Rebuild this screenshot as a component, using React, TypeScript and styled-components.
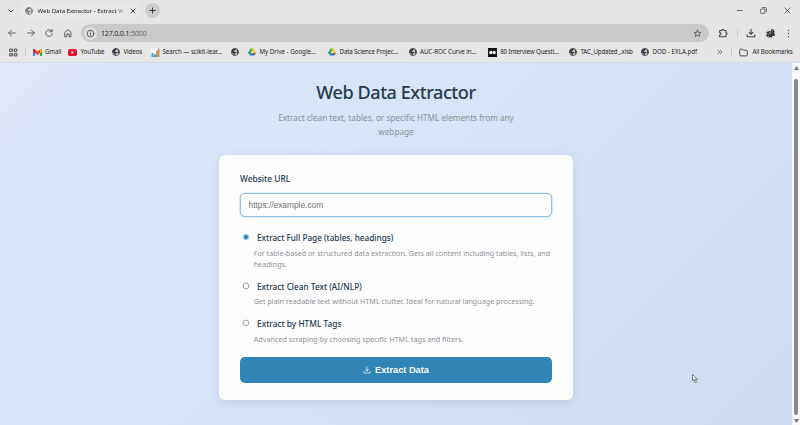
import React from 'react';
import styled, { createGlobalStyle } from 'styled-components';

const GlobalStyle = createGlobalStyle`
  * { box-sizing: border-box; }
  html, body { margin: 0; padding: 0; }
  body { font-family: "Noto Sans", "Open Sans", sans-serif; overflow: hidden; }
`;

const Window = styled.div`
  width: 800px;
  height: 425px;
  display: flex;
  flex-direction: column;
  background: #e5e5e5;
`;

const TabStrip = styled.div`
  height: 22px;
  display: flex;
  align-items: center;
  padding: 0 29px 1px 8px;
`;

const Tab = styled.div`
  width: 121px;
  height: 17px;
  margin-left: 6px;
  padding: 0 5px 0 5px;
  display: flex;
  align-items: center;
  gap: 4.5px;
  background: #e8e8e8;
  border-radius: 5px;
  svg { flex: none; }
`;

const TabTitle = styled.span`
  flex: 1;
  overflow: hidden;
  white-space: nowrap;
  font-size: 6.15px;
  font-weight: 400;
  line-height: 10px;
  letter-spacing: -0.06px;
  color: #1f1f21;
  mask-image: linear-gradient(90deg, #000 88%, transparent 100%);
`;

const NewTab = styled.div`
  width: 15px;
  height: 15px;
  margin-left: 4px;
  display: grid;
  place-items: center;
  border-radius: 50%;
  background: #cccccd;
`;

const WindowButtons = styled.div`
  margin-left: auto;
  margin-right: -20px;
  display: flex;
  gap: 17px;
`;

const Toolbar = styled.div`
  height: 22px;
  display: flex;
  align-items: center;
  padding: 0 7px 0 7px;
`;

const NavButtons = styled.div`
  width: 74px;
  display: flex;
  gap: 8.7px;
`;

const AddressBar = styled.div`
  width: 628px;
  height: 18px;
  padding: 0 7px 0 3px;
  display: flex;
  align-items: center;
  border-radius: 9px;
  background: #c9c9ca;
`;

const InfoBadge = styled.span`
  width: 13px;
  height: 13px;
  display: grid;
  place-items: center;
  border-radius: 50%;
  background: #dedede;
`;

const Url = styled.span`
  flex: 1;
  margin-left: 4px;
  font-size: 7.2px;
  line-height: 12px;
  letter-spacing: -0.25px;
  color: #2d2d2f;
  span { color: #69696b; }
`;

const Actions = styled.div`
  flex: 1;
  display: flex;
  align-items: center;
  justify-content: space-between;
  padding-left: 9px;
`;

const Divider = styled.i`
  width: 1px;
  height: 8px;
  background: #cbcbcd;
`;

const Bookmarks = styled.div`
  height: 19px;
  display: grid;
  grid-template-columns: 16px 8px 35px 44px 39px 80px 17px 80px 80.5px 79.5px 81px 72px 76px 14px 8px 1fr;
  align-items: center;
  padding: 0 0 2px 9px;
  border-bottom: 1px solid #d3dae6;
  background: #e6e6e7;
`;

const Bookmark = styled.div<{ $gap?: number; $track?: number }>`
  display: flex;
  align-items: center;
  gap: ${p => p.$gap ?? 3.5}px;
  white-space: nowrap;
  font-size: 6.2px;
  font-weight: 400;
  line-height: 10px;
  letter-spacing: ${p => p.$track ?? -0.05}px;
  color: #1f1f22;
  svg { flex: none; }
`;

const Viewport = styled.div`
  height: 362px;
  display: flex;
`;

const Page = styled.main`
  flex: 1;
  display: flex;
  flex-direction: column;
  align-items: center;
  padding-top: 16px;
  background: linear-gradient(135deg, #dfe7f9 0%, #d7e3f6 45%, #cddcf2 100%);
`;

const Title = styled.h1`
  margin: 0;
  font-size: 18.1px;
  font-weight: 550;
  line-height: 26px;
  letter-spacing: -0.46px;
  color: #263b50;
`;

const Subtitle = styled.p`
  width: 250px;
  margin: 6px 0 0;
  text-align: center;
  font-size: 8.2px;
  line-height: 14px;
  color: #8a9297;
`;

const Card = styled.form`
  width: 354px;
  height: 245px;
  margin-top: 16px;
  padding: 17px 21px;
  border-radius: 6px;
  background: #fdfdfe;
  box-shadow: 0 2px 8px rgba(60, 90, 140, 0.16);
`;

const FieldLabel = styled.label`
  display: block;
  font-size: 8.4px;
  font-weight: 550;
  line-height: 14px;
  color: #24384b;
`;

const UrlInput = styled.input`
  display: block;
  width: 312px;
  height: 24px;
  margin-top: 7px;
  padding: 0 7.5px 1px;
  border: 1px solid #93c0e2;
  border-radius: 5px;
  outline: none;
  background: #fdfdfe;
  box-shadow: 0 0 0 0.6px #c4def1;
  font: 8.35px "Liberation Sans", Arial, sans-serif;
  color: #333;
  &::placeholder { color: #757575; opacity: 1; }
`;

const Options = styled.div`
  display: flex;
  flex-direction: column;
  gap: 9px;
  margin-top: 13px;
`;

const Choice = styled.label<{ $size: number }>`
  display: flex;
  align-items: center;
  gap: 7px;
  height: 15px;
  padding-left: 2px;
  font-size: ${p => p.$size}px;
  font-weight: 550;
  color: #24384b;
  svg { flex: none; }
`;

const Hint = styled.p<{ $size: number }>`
  width: 300px;
  margin: 2.5px 0 0 13.7px;
  font-size: ${p => p.$size}px;
  line-height: 11px;
  color: #8e9296;
`;

const Submit = styled.button`
  width: 312px;
  height: 26px;
  margin-top: 12px;
  display: flex;
  align-items: center;
  justify-content: center;
  gap: 4px;
  border: 0;
  border-radius: 5px;
  background: #3184b6;
  color: #fbfdfe;
  font: bold 9.25px "Liberation Sans", Arial, sans-serif;
`;

const Scrollbar = styled.div`
  width: 8px;
  display: flex;
  flex-direction: column;
  align-items: center;
  padding: 3px 0 2px;
  gap: 9px;
  background: #f8f8f9;
`;

const Thumb = styled.div`
  width: 4px;
  flex: 1;
  margin-bottom: -5px;
  border-radius: 2px;
  background: #87888a;
`;

const Pointer = styled.svg`
  position: absolute;
  left: 692px;
  top: 374px;
`;

type LineProps = { s?: number; d: string; c?: string; w?: number };
const Line = ({ s = 10, d, c = '#454648', w = 1 }: LineProps) => (
  <svg width={s} height={s} viewBox="0 0 12 12" fill="none" stroke={c} strokeWidth={w} strokeLinecap="round" strokeLinejoin="round">
    <path d={d} />
  </svg>
);

const Radio = ({ on }: { on?: boolean }) => (
  <svg width="8" height="9" viewBox="0 0 8 9">
    <circle cx="4" cy="4" r="2.900" fill={on ? '#c2def1' : '#fff'} stroke={on ? '#8cc0e3' : '#8b8d90'} strokeWidth="0.800" />
    {on && <circle cx="4" cy="4" r="1.900" fill="#2179b8" />}
  </svg>
);

const Globe = ({ c = '#37383b' }: { c?: string }) => (
  <svg width="8" height="8" viewBox="0 0 16 16">
    <circle cx="8" cy="8" r="7" fill="#dedee0" stroke={c} strokeWidth="1.700" />
    <path fill={c} d="M1 7 2 4 6 1h3l1 2-2 2H6v2l4 1v2l-2 1-1 4-2-1v-3L2 9ZM12 3l3 4-1 5-2-2h-1V8l2-1-2-2Z" />
  </svg>
);

const Gmail = () => (
  <svg width="9" height="7" viewBox="0 0 18 14">
    <path fill="#4285f4" d="M0 3h4v11H1q-1 0-1-1z" /><path fill="#34a853" d="M14 3h4v10q0 1-1 1h-3z" />
    <path fill="#ea4335" d="M0 2q1-3 4-1l5 4 5-4q3-2 4 1v3l-9 7-9-7Z" /><path fill="#fbbc04" d="M14 1q3-2 4 1v3l-4 3z" /><path fill="#c5221f" d="M0 2q1-3 4-1v7L0 5z" />
  </svg>
);

const YouTube = () => (
  <svg width="9" height="7" viewBox="0 0 18 14">
    <rect width="18" height="14" rx="3.5" fill="#e80d32" /><path fill="#fff" d="m7 4 5 3-5 3z" />
  </svg>
);

const Analytics = () => (
  <svg width="9" height="9" viewBox="0 0 18 18">
    <path fill="#f8f8f7" d="M0 0h18v18H0z" /><path fill="#3499cd" d="M1 10h4v8H1zm5 3h4v5H6z" />
    <path fill="#e69138" d="M10 6h4v12h-4z" /><path fill="#c98a5c" d="M13 1h4v17h-4z" />
  </svg>
);

const Drive = () => (
  <svg width="8" height="8" viewBox="0 0 18 16">
    <path fill="#15a35b" d="M6 0h6L4 15 0 10Z" /><path fill="#fbc116" d="M6 0h6l6 10h-6Z" />
    <path fill="#3677dd" d="M6 10h12l-4 6H4Z" /><path fill="#e04b34" d="M12 10h6l-4 6Z" /><path fill="#e6e6e7" d="m9 5 3 5H6Z" />
  </svg>
);

const Medium = () => (
  <svg width="9" height="9" viewBox="0 0 18 18">
    <path d="M0 0h18v18H0z" fill="#111" /><circle cx="6" cy="9" r="3.5" fill="#fff" /><ellipse cx="12" cy="9" rx="2.5" ry="3.3" fill="#fff" /><path d="M15 6h1v6h-1z" fill="#fff" />
  </svg>
);

const Avatar = () => (
  <svg width="11" height="11" viewBox="0 0 22 22">
    <circle cx="11" cy="11" r="11" fill="#dcdcdd" />
    <path fill="#323236" d="m2 8 5-1 2-1 3 1 1-5 4 1 1 3 2 2-3 2 3 2-1 4-4-1-1 4-4-1-3 2 1-4-5 2 1-4-3 1 4-4Z" />
    <path fill="#a0a0a5" d="m8 9 3-1 1 3-3 2ZM14 6l2-1-1 3ZM6 12l2 1-2 2Z" />
  </svg>
);

const Download = ({ s, c, w = 1.3 }: { s: number; c?: string; w?: number }) => <Line s={s} c={c} w={w} d="M6 1.500v6M3.700 5.200 6 7.500 8.300 5.200M1.500 8v2.500h9V8" />;

export default function App() {
  return (
    <Window>
      <GlobalStyle />
      <TabStrip>
        <Line s={6} w={2} d="m2 4 4 4 4-4" />
        <Tab>
          <Globe c="#7c7d80" />
          <TabTitle>Web Data Extractor - Extract W</TabTitle>
          <Line s={6} w={1.8} c="#303033" d="m2 2 8 8M10 2l-8 8" />
        </Tab>
        <NewTab><Line s={7} w={1.6} c="#333" d="M6 1.500v9M1.500 6h9" /></NewTab>
        <WindowButtons>
          <Line s={7} d="M2 6h9" w={1.4} />
          <Line s={7} w={1.3} d="M1 4.500q0-1 1-1h5.500q1 0 1 1V10q0 1-1 1H2q-1 0-1-1ZM4 1h5q2 0 2 2v5" />
          <Line s={7} w={1.3} d="m1.500 1.500 9 9M10.500 1.500l-9 9" />
        </WindowButtons>
      </TabStrip>
      <Toolbar>
        <NavButtons>
          <Line d="M10 6H2m3.500-3.500L2 6l3.500 3.500" />
          <Line d="M2 6h8M6.500 2.500 10 6 6.500 9.500" />
          <Line d="M9.500 4A4 4 0 1 0 10 7M9.800 1.800V4.500H7" />
          <Line d="M2.500 5 6 2l3.500 3v5.500H7.300V7H4.700v3.500H2.500Z" />
        </NavButtons>
        <AddressBar>
          <InfoBadge><Line s={9} d="M10.500 6a4.500 4.500 0 1 1-9 0 4.500 4.500 0 0 1 9 0M6 5.500V8.300M6 3.700v.1" w={1.1} /></InfoBadge>
          <Url>127.0.0.1<span>:5000</span></Url>
          <Line s={9} d="m6 1.500 1.300 2.900 3.200.3-2.400 2.100.7 3.200L6 8.300 3.200 10l.7-3.200-2.400-2.100 3.200-.3Z" />
        </AddressBar>
        <Actions>
          <Line s={10} w={1.3} d="M2 3h2.700q0-1.200 1.300-1.200T7.300 3h2.200v2.400q1.300 0 1.300 1.300T9.500 8v2.500H2V8.200q1.500 0 1.500-1.400T2 5.400Z" />
          <Divider />
          <Download s={10} />
          <Avatar />
          <Line s={9} w={1.7} d="M6 1.800v.1M6 6v.1M6 10.200v.1" />
        </Actions>
      </Toolbar>
      <Bookmarks>
        <Line s={9} w={1.3} d="M1.500 1.500h3v3h-3ZM7.500 1.500h3v3h-3ZM1.500 7.500h3v3h-3ZM7.500 7.500h3v3h-3Z" />
        <Divider />
        <Bookmark $gap={3} $track={-0.18}><Gmail />Gmail</Bookmark>
        <Bookmark $track={-0.15}><YouTube />YouTube</Bookmark>
        <Bookmark $track={-0.1}><Globe />Videos</Bookmark>
        <Bookmark $gap={2.5} $track={-0.06}><Analytics />Search — scikit-lear...</Bookmark>
        <Bookmark><Globe /></Bookmark>
        <Bookmark $track={-0.02}><Drive />My Drive - Google...</Bookmark>
        <Bookmark $track={-0.14}><Drive />Data Science Projec...</Bookmark>
        <Bookmark $track={-0.06}><Globe />AUC-ROC Curve in...</Bookmark>
        <Bookmark $gap={3.2} $track={-0.13}><Medium />80 Interview Questi...</Bookmark>
        <Bookmark $track={-0.15}><Globe />TAC_Updated_.xlsb</Bookmark>
        <Bookmark $track={0}><Globe />DOD - EXLA.pdf</Bookmark>
        <Line s={6} w={1.4} d="m2 2.500 3.500 3.500L2 9.500M6.500 2.500 10 6 6.500 9.500" />
        <Divider />
        <Bookmark $gap={4.5} $track={-0.11}><Line s={9} w={1.3} d="M1 2.500q0-1 1-1h2.500L6 3h4q1 0 1 1v5.500q0 1-1 1H2q-1 0-1-1Z" />All Bookmarks</Bookmark>
      </Bookmarks>
      <Viewport>
        <Page>
          <Title>Web Data Extractor</Title>
          <Subtitle>Extract clean text, tables, or specific HTML elements from any webpage</Subtitle>
          <Card>
            <FieldLabel>Website URL</FieldLabel>
            <UrlInput placeholder="https://example.com" />
            <Options>
              <div>
                <Choice $size={8.2}><Radio on />Extract Full Page (tables, headings)</Choice>
                <Hint $size={7.18}>For table-based or structured data extraction. Gets all content including tables, lists, and headings.</Hint>
              </div>
              <div>
                <Choice $size={8.25}><Radio />Extract Clean Text (AI/NLP)</Choice>
                <Hint $size={7.2}>Get plain readable text without HTML clutter. Ideal for natural language processing.</Hint>
              </div>
              <div>
                <Choice $size={8.32}><Radio />Extract by HTML Tags</Choice>
                <Hint $size={7.23}>Advanced scraping by choosing specific HTML tags and filters.</Hint>
              </div>
            </Options>
            <Submit type="button"><Download s={8} w={1.1} c="#eaf4fa" />Extract Data</Submit>
          </Card>
        </Page>
        <Scrollbar>
          <svg width="5" height="4" viewBox="0 0 5 4"><path fill="#77787a" d="M2.500 0 5 4H0Z" /></svg>
          <Thumb />
          <svg width="5" height="4" viewBox="0 0 5 4"><path fill="#77787a" d="M0 0h5L2.500 4Z" /></svg>
        </Scrollbar>
      </Viewport>
      <Pointer width="6" height="9" viewBox="0 0 12 18">
        <path d="M1 1v13l3-3 2.500 6 2.500-1-2.500-5.500H11Z" fill="#fff" stroke="#55565b" strokeWidth="1.500" />
      </Pointer>
    </Window>
  );
}
